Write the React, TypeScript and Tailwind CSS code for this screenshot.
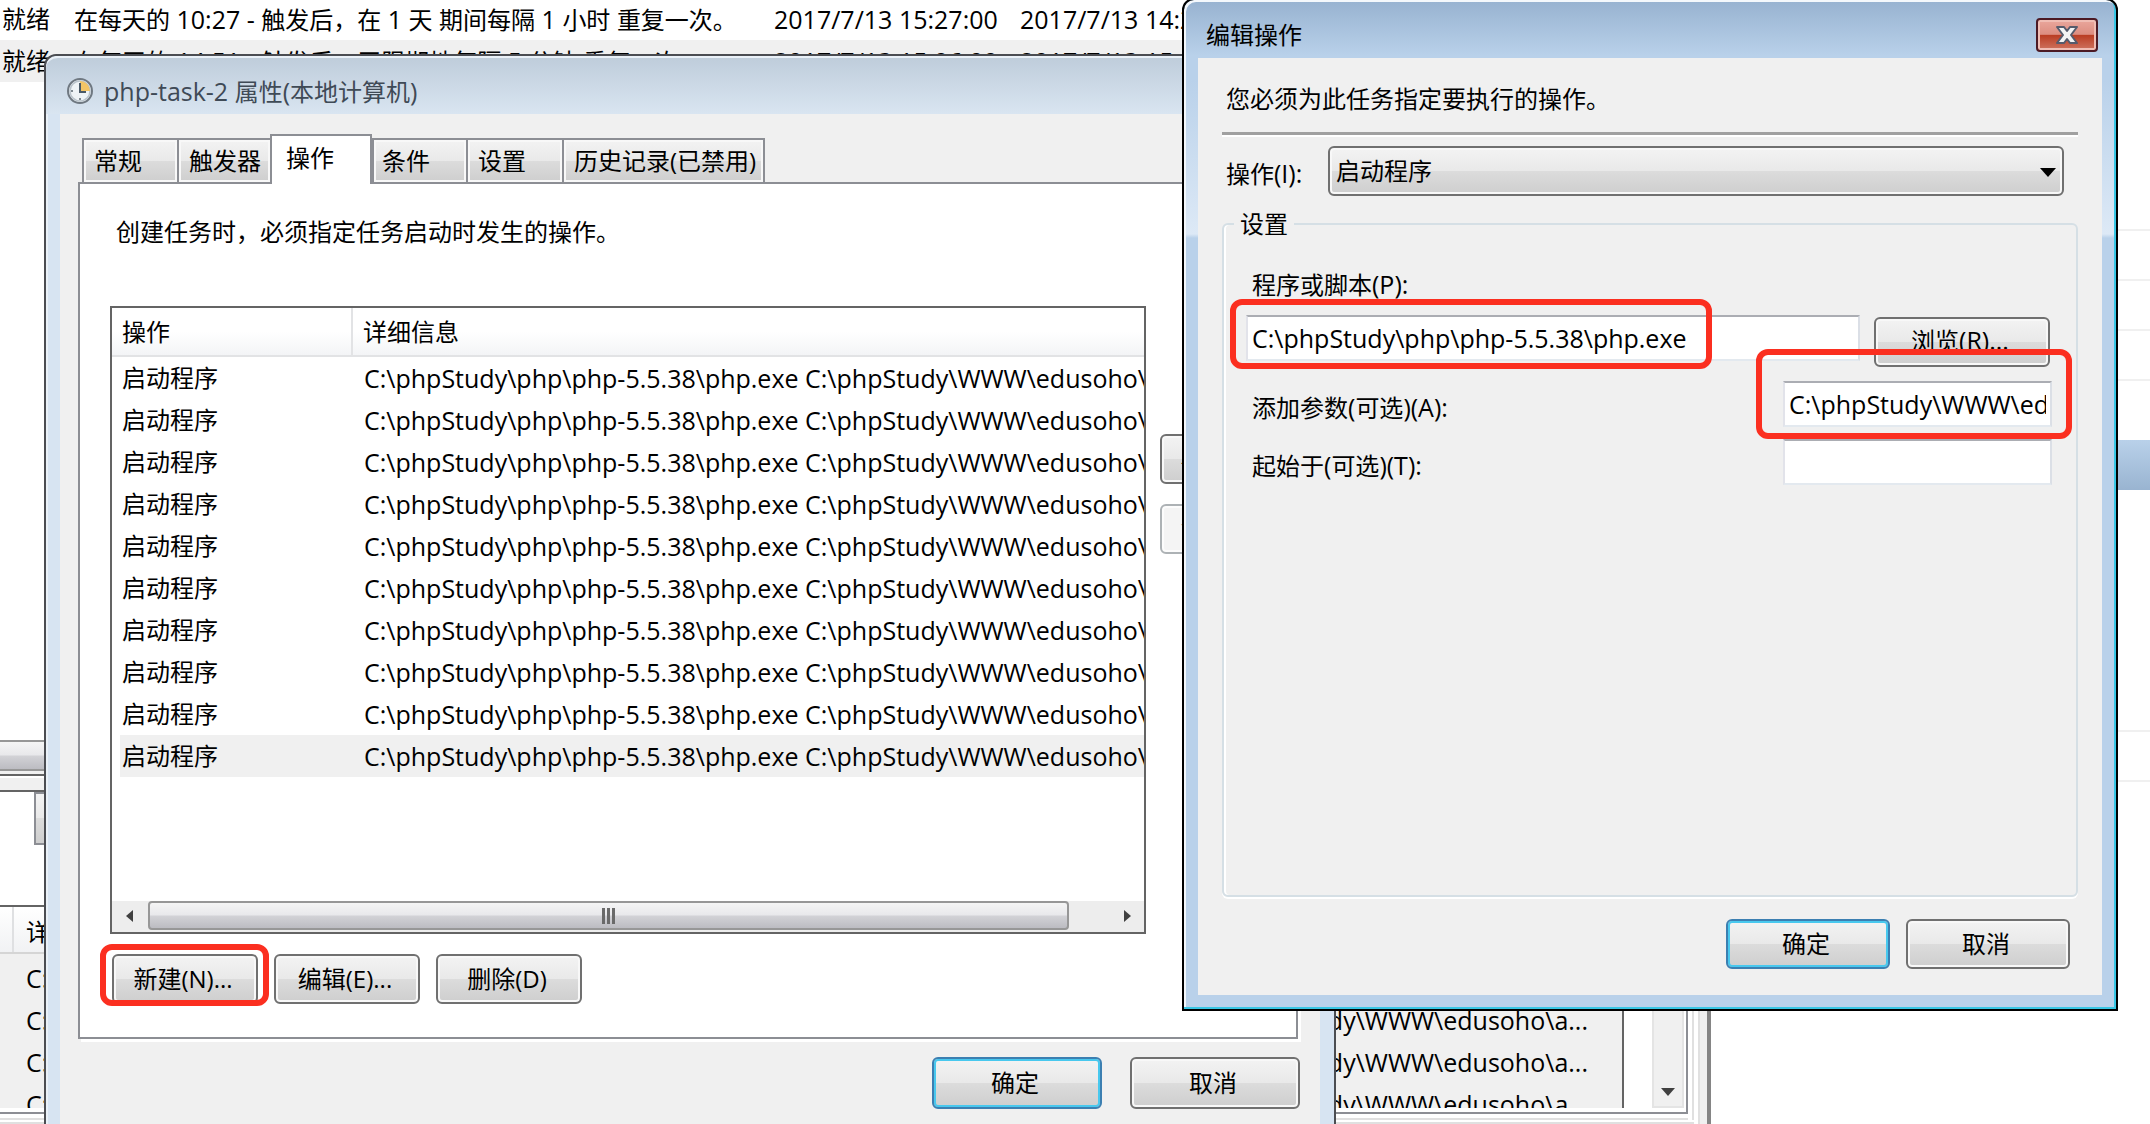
import { useState } from "react"
import type { ReactNode } from "react"
import clsx from "clsx"

const PHP = "C:\\phpStudy\\php\\php-5.5.38\\php.exe"
const SCRIPT = "C:\\phpStudy\\WWW\\edusoho\\app\\console"

const tabs = [
  { label: "常规", className: "w-[95px] pl-2.5" },
  { label: "触发器", className: "w-[93px] pl-2.5" },
  { label: "操作", className: "w-[102px] pl-3.5" },
  { label: "条件", className: "w-[94px] pl-2" },
  { label: "设置", className: "w-[96px] pl-2.5" },
  { label: "历史记录(已禁用)", className: "w-[203px] pl-2.5" },
]

const triggers = [
  { text: "在每天的 10:27 - 触发后，在 1 天 期间每隔 1 小时 重复一次。", next: "2017/7/13 15:27:00", last: "2017/7/13 14:27:00" },
  { text: "在每天的 14:51 - 触发后，无限期地每隔 5 分钟 重复一次。", next: "2017/7/13 15:06:00", last: "2017/7/13 15:01:00" },
]

// Latin runs are set slightly larger than the Chinese text around them
function Mixed({ text }: { text: string }) {
  return (
    <span className="whitespace-pre">
      {text.split(/([ -~]+)/).map((part, i) =>
        i % 2 === 1 ? <span key={i} className="text-[25px] leading-8">{part}</span> : part
      )}
    </span>
  )
}

type ButtonProps = {
  children: ReactNode
  primary?: boolean
  disabled?: boolean
  className?: string
}

function WinButton({ children, primary, disabled, className }: ButtonProps) {
  return (
    <button
      disabled={disabled}
      className={clsx(
        "flex shrink-0 items-center justify-center rounded-md border-2 pr-1 whitespace-nowrap",
        primary && "border-[#3c7fb1] shadow-[inset_0_0_0_2px_#48c8ee]",
        disabled && "border-[#adb2b5] bg-[#f4f4f4] shadow-[inset_0_0_0_2px_#fcfcfc]",
        !primary && !disabled && "border-[#707070] shadow-[inset_0_0_0_2px_#f8f8f8]",
        !disabled && "bg-[linear-gradient(#f3f3f3,#e9e9e9_49%,#dcdcdc_50%,#cecece)]",
        className
      )}
    >
      {children}
    </button>
  )
}

// Red annotation frame, drawn over the controls
function Mark({ className }: { className: string }) {
  return <div className={clsx("pointer-events-none absolute z-10 rounded-xl border-6 border-[#fb2f20]", className)} />
}

function ClockIcon() {
  return (
    <svg viewBox="0 0 28 28" className="size-7 shrink-0">
      <circle cx="14" cy="14" r="12" fill="#eef3f6" stroke="#6f7881" strokeWidth="2" />
      <circle cx="14" cy="14" r="10" fill="none" stroke="#b9c3cb" strokeWidth="1.5" />
      <path d="M14 14V4a10 10 0 0 1 10 10z" fill="#f3c566" />
      <path d="M14 6v9h6" fill="none" stroke="#4a5a68" strokeWidth="2" />
      <path d="M5 14h2M14 21v2" stroke="#7e8991" strokeWidth="2" />
    </svg>
  )
}

function CloseButton() {
  return (
    <button
      aria-label="关闭"
      className="flex h-[34px] w-[62px] items-center justify-center rounded border-2 border-[#4c1a24] bg-[linear-gradient(#eaa79d,#dc8d80_48%,#b93c22_50%,#cf7460)] shadow-[inset_0_0_0_2px_#f0bdb4]"
    >
      <svg viewBox="0 0 24 20" className="h-5 w-6">
        <path
          d="M2 2h7l3 4 3-4h7l-6 8 6 8h-7l-3-4-3 4H2l6-8z"
          fill="#f3f3f3"
          stroke="#565b6c"
          strokeWidth="2"
          strokeLinejoin="round"
        />
      </svg>
    </button>
  )
}

function HorizontalScrollbar() {
  return (
    <div className="flex h-[31px] items-center bg-[#ededed] pb-0.5">
      <button aria-label="向左滚动" className="flex w-9 justify-center">
        <svg viewBox="0 0 10 16" className="h-4 w-2.5">
          <path d="M8 2v12L1 8z" fill="#404040" />
        </svg>
      </button>
      <div className="flex h-full flex-1 items-center justify-center gap-0.5 rounded-sm border-2 border-[#979797] bg-[linear-gradient(#f5f5f5,#e8e8eb_48%,#d2d2d6_52%,#bcbcc2)]">
        <span className="h-4 w-[3px] bg-[#6a6a6a]" />
        <span className="h-4 w-[3px] bg-[#6a6a6a]" />
        <span className="h-4 w-[3px] bg-[#6a6a6a]" />
      </div>
      <button aria-label="向右滚动" className="flex w-[75px] justify-end pr-3">
        <svg viewBox="0 0 10 16" className="h-4 w-2.5">
          <path d="M2 2v12l7-6z" fill="#404040" />
        </svg>
      </button>
    </div>
  )
}

function SchedulerWindow() {
  return (
    <div className="flex h-screen min-w-0 flex-1 flex-col border-r-4 border-[#858585] bg-white">
      {triggers.map((trigger, i) => (
        <div key={i} className={clsx("flex shrink-0 items-center pl-0.5", i === 0 ? "h-10 pb-0.5" : "h-[42px] bg-[#f0f0f0]")}>
          <span className="w-[72px]">就绪</span>
          <span className="w-[700px]"><Mixed text={trigger.text} /></span>
          <span className="w-[246px]"><Mixed text={trigger.next} /></span>
          <Mixed text={trigger.last} />
        </div>
      ))}
      <div className="flex-1" />
      <div className="h-[31px] border-y-2 border-[#979797] bg-[linear-gradient(#f5f5f5,#e8e8eb_48%,#d2d2d6_52%,#bcbcc2)]" />
      <div className="h-[5px] border-b-2 border-[#646464] bg-[#f0f0f0]" />
      <div className="h-4 border-y-2 border-t-white border-b-[#646464] bg-[#f0f0f0]" />
      <div className="h-[53px] pl-[34px]">
        <div className="h-full border-2 border-[#8c8e94] bg-[linear-gradient(#f3f3f3,#e9e9e9_49%,#dcdcdc_50%,#cecece)]" />
      </div>
      <div className="flex h-[279px] shrink-0 bg-[#f0f0f0] pr-[7px]">
        <div className="flex flex-1 flex-col border-r-2 border-[#e0e0e0] bg-white pr-1">
          <div className="flex flex-1 flex-col border-r-2 border-[#e0e0e0] pr-1">
            <div className="flex h-[269px] border-r-2 border-b-2 border-[#8c8e94] pr-0.5 pb-1">
              <div className="mt-[60px] flex-1 overflow-hidden border-t-2 border-r-2 border-[#646464] bg-[#f0f0f0]">
                <div className="flex h-[47px] items-center border-b-2 border-[#d5d5d5] bg-linear-to-b from-white to-[#f1f2f4]">
                  <span className="h-full w-[14px] border-r-2 border-[#dfe0e2]" />
                  <span className="pt-1 pl-3">详细信息</span>
                </div>
                {[0, 1, 2, 3].map((i) => (
                  <div key={i} className="flex h-[42px] items-center justify-between pt-2 pr-[34px] pl-[26px] text-[25px]">
                    <span>{PHP}</span>
                    <span>C:\phpStudy\WWW\edusoho\a...</span>
                  </div>
                ))}
              </div>
              <div className="ml-7 flex w-8 flex-col items-center justify-end border-x-2 border-b-2 border-[#e4e4e4] bg-[#f0f0f0] pb-2.5">
                <svg viewBox="0 0 14 8" className="h-2 w-3.5">
                  <path d="M0 0h14L7 8z" fill="#404040" />
                </svg>
              </div>
            </div>
            <div className="mt-1 border-b-2 border-[#e0e0e0]" />
          </div>
          <div className="mt-0.5 border-b-2 border-[#e0e0e0]" />
        </div>
      </div>
    </div>
  )
}

function BackgroundList() {
  return (
    <div className="flex h-screen w-[439px] shrink-0 flex-col bg-white pt-[180px]">
      <div className="h-[51px] border-b-2 border-[#f0f0f0]" />
      <div className="h-[50px] border-b-2 border-[#f0f0f0]" />
      <div className="h-[50px] border-b-2 border-[#f0f0f0]" />
      <div className="h-[50px] border-b-2 border-[#f0f0f0]" />
      <div className="mt-[59px] h-[50px] bg-linear-to-b from-[#b9d1ea] to-[#99b4d1]" />
      <div className="mt-[192px] h-[50px] border-b-2 border-[#f0f0f0]" />
      <div className="h-[50px] border-b-2 border-[#f0f0f0]" />
    </div>
  )
}

function ActionList() {
  return (
    <div className="flex h-[628px] min-w-0 flex-1 flex-col border-2 border-[#646464] bg-white">
      <div className="flex-1 overflow-hidden">
        <table className="w-full table-fixed border-collapse text-left">
          <thead>
            <tr className="h-12 bg-linear-to-b from-white from-50% to-[#f3f4f6]">
              <th className="w-[240px] border-r-2 border-b-2 border-[#e2e3e5] pl-2.5 font-normal">操作</th>
              <th className="border-b-2 border-[#e2e3e5] pl-2.5 font-normal">详细信息</th>
            </tr>
          </thead>
          <tbody>
            {Array.from({ length: 10 }, (_, i) => (
              <tr key={i} className="h-[42px]">
                <td className="pl-2">
                  <div className={clsx("flex h-[42px] items-center pl-0.5", i === 9 && "bg-[#f0f0f0]")}>启动程序</div>
                </td>
                <td className={clsx("overflow-hidden pl-3 text-[25px] leading-8 whitespace-nowrap", i === 9 && "bg-[#f0f0f0]")}>
                  {PHP} {SCRIPT}
                </td>
              </tr>
            ))}
          </tbody>
        </table>
      </div>
      <HorizontalScrollbar />
    </div>
  )
}

function PropertiesWindow() {
  const [active, setActive] = useState("操作")

  return (
    <section className="absolute top-[54px] right-[814px] bottom-0 left-[44px] flex flex-col rounded-t-xl border-2 border-b-0 border-[#4b4d52] bg-[#d7e4f2] pr-3.5 pl-3.5 shadow-[inset_2px_2px_0_#eaf1f8]">
      <header className="-mx-3.5 flex h-[58px] shrink-0 items-center gap-2.5 rounded-t-xl border-t-2 border-[#eaf1f8] bg-linear-to-b from-[#bfcddb] to-[#d9e5f1] pt-2.5 pl-5 text-[#3f4a56]">
        <ClockIcon />
        <h1><Mixed text="php-task-2 属性(本地计算机)" /></h1>
      </header>
      <div className="flex flex-1 flex-col bg-[#f0f0f0] pt-5 pr-[22px] pl-[18px]">
        <div role="tablist" className="z-10 -mb-0.5 flex h-[50px] items-end pl-1">
          {tabs.map((tab) => (
            <button
              key={tab.label}
              role="tab"
              aria-selected={tab.label === active}
              onClick={() => setActive(tab.label)}
              className={clsx(
                "shrink-0 border-2 border-[#8c8e94] text-left whitespace-nowrap",
                tab.label === active
                  ? "h-[50px] border-b-0 bg-white pb-1"
                  : "h-[46px] border-r-0 bg-[linear-gradient(#f3f3f3,#e9e9e9_49%,#dcdcdc_50%,#cecece)] shadow-[inset_0_0_0_2px_#f8f8f8] last:border-r-2",
                tab.className
              )}
            >
              {tab.label}
            </button>
          ))}
        </div>
        <div className="flex h-[857px] flex-col border-2 border-[#8c8e94] bg-white pr-[76px] pl-[30px] shadow-[3px_3px_0_#ffffff]">
          <p className="mt-8 h-[90px] pl-1.5">创建任务时，必须指定任务启动时发生的操作。</p>
          <div className="flex gap-3.5">
            <ActionList />
            <div className="flex flex-col gap-5 pt-32">
              <WinButton className="h-[50px] w-[60px] text-sm">▲</WinButton>
              <WinButton disabled className="h-[50px] w-[60px] text-sm text-gray-500">▼</WinButton>
            </div>
          </div>
          <div className="mt-5 flex gap-4 pl-0.5">
            <div className="relative flex">
              <WinButton className="h-[50px] w-[146px]">新建(N)...</WinButton>
              <Mark className="-top-2.5 -left-3 h-[62px] w-[169px]" />
            </div>
            <WinButton className="h-[50px] w-[146px]">编辑(E)...</WinButton>
            <WinButton className="h-[50px] w-[146px]">删除(D)</WinButton>
          </div>
        </div>
        <div className="-mr-0.5 flex justify-end gap-7 pt-[18px]">
          <WinButton primary className="h-[52px] w-[170px]">确定</WinButton>
          <WinButton className="h-[52px] w-[170px]">取消</WinButton>
        </div>
      </div>
    </section>
  )
}

function EditActionDialog() {
  const [program, setProgram] = useState(PHP)
  const [args, setArgs] = useState(SCRIPT)
  const [startIn, setStartIn] = useState("")

  const inputClass =
    "h-[46px] border-2 border-t-[#abadb3] border-r-[#dbdfe6] border-b-[#e3e9ef] border-l-[#e2e3ea] bg-white px-1 text-[25px] outline-none"

  return (
    <section className="absolute -top-0.5 right-8 left-[1182px] rounded-t-xl border-2 border-black bg-[linear-gradient(#97b2d0,#b9d1ea_56px,#b9d1ea_80px,#dde9f6_234px,#b9d1ea_238px)] px-3.5 pb-3.5 shadow-[inset_-2px_-2px_0_#38c6e4,inset_2px_2px_0_#f4f8fc]">
      <header className="flex h-[58px] justify-between pt-[18px] pr-1 pl-2">
        <h2 className="leading-[34px]">编辑操作</h2>
        <CloseButton />
      </header>
      <div className="h-[937px] bg-[#f0f0f0] px-6 pt-[25px]">
        <p className="h-[49px] pl-1">您必须为此任务指定要执行的操作。</p>
        <hr className="h-[5px] border-t-3 border-b-2 border-t-[#a0a0a0] border-b-white" />
        <div className="mt-[9px] flex items-center pr-3.5 pl-1">
          <label htmlFor="action" className="w-[102px] pt-1"><Mixed text="操作(I):" /></label>
          <div className="relative flex-1">
            <select
              id="action"
              className="h-[50px] w-full appearance-none rounded-md border-2 border-[#707070] bg-[linear-gradient(#f3f3f3,#e9e9e9_49%,#dcdcdc_50%,#cecece)] pl-1.5 shadow-[inset_0_0_0_2px_#f8f8f8]"
            >
              <option>启动程序</option>
            </select>
            <svg viewBox="0 0 16 9" className="pointer-events-none absolute top-[22px] right-2 h-[9px] w-4">
              <path d="M0 0h16L8 9z" fill="#000" />
            </svg>
          </div>
        </div>
        <fieldset className="mt-3 h-[689px] rounded-md border-2 border-[#d5dfe5] pr-6 pl-[22px] shadow-[inset_2px_0_0_#ffffff,0_2px_0_#ffffff]">
          <legend className="-ml-3 px-1.5">设置</legend>
          <label htmlFor="program" className="mt-7 block pl-1.5"><Mixed text="程序或脚本(P):" /></label>
          <div className="relative mt-[14px] flex items-start">
            <input
              id="program"
              value={program}
              onChange={(e) => setProgram(e.target.value)}
              className={clsx(inputClass, "min-w-0 flex-1")}
            />
            <WinButton className="mt-0.5 mr-0.5 ml-[14px] h-[50px] w-[176px] pb-1"><Mixed text="浏览(R)..." /></WinButton>
            <Mark className="-top-4 -left-4 h-[70px] w-[482px]" />
          </div>
          <div className="relative mt-[14px] flex items-center justify-between">
            <label htmlFor="args" className="pt-1.5 pl-1.5"><Mixed text="添加参数(可选)(A):" /></label>
            <input
              id="args"
              value={args}
              onChange={(e) => setArgs(e.target.value)}
              className={clsx(inputClass, "w-[269px]")}
            />
            <Mark className="-top-8 -right-5 h-[90px] w-[316px]" />
          </div>
          <div className="mt-3 flex items-center justify-between">
            <label htmlFor="start-in" className="pt-1.5 pl-1.5"><Mixed text="起始于(可选)(T):" /></label>
            <input
              id="start-in"
              value={startIn}
              onChange={(e) => setStartIn(e.target.value)}
              className={clsx(inputClass, "w-[269px]")}
            />
          </div>
        </fieldset>
        <div className="mt-[22px] flex justify-end gap-4 pr-2">
          <WinButton primary className="h-[50px] w-[164px]">确定</WinButton>
          <WinButton className="h-[50px] w-[164px]">取消</WinButton>
        </div>
      </div>
    </section>
  )
}

export default function App() {
  return (
    <main className="relative flex h-screen w-full overflow-hidden bg-white font-['Open_Sans','Noto_Sans_CJK_SC',sans-serif] text-2xl text-black">
      <SchedulerWindow />
      <BackgroundList />
      <PropertiesWindow />
      <EditActionDialog />
    </main>
  )
}
